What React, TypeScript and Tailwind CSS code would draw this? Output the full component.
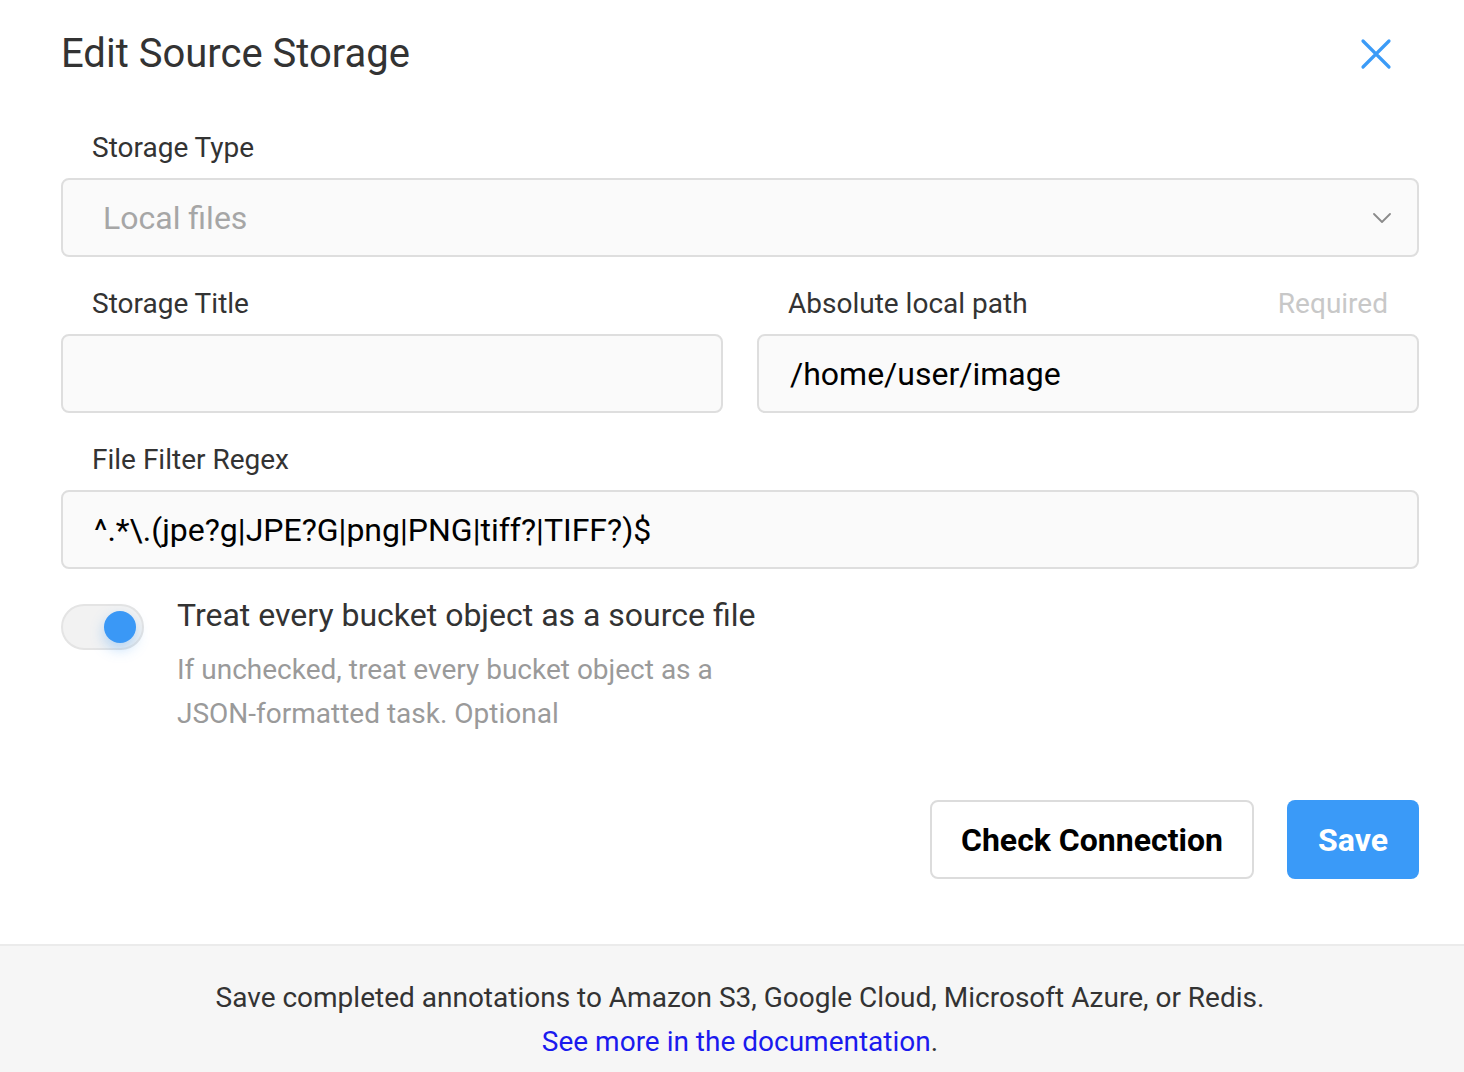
import React from "react";

function Label({ children, hint }: { children: React.ReactNode; hint?: string }) {
  return (
    <div className="flex items-center justify-between px-[31px] pt-[2px] h-[48px] text-[28px] text-[#333]">
      <span>{children}</span>
      {hint && <span className="text-[#c8c8c8]">{hint}</span>}
    </div>
  );
}

function Field({ value }: { value?: string }) {
  return (
    <div className="h-[79px] rounded-[8px] border-2 border-[#dedede] bg-[#fafafa] flex items-center px-[31px] text-[32px] text-black">
      {value}
    </div>
  );
}

export default function App() {
  return (
    <div
      className="w-[1464px] h-[1072px] bg-white flex flex-col overflow-hidden"
      style={{ fontFamily: "Roboto, 'Noto Sans', sans-serif" }}
    >
      {/* Header */}
      <div className="flex items-center justify-between pl-[61px] pr-[72px] h-[108px]">
        <h1 className="text-[40px] text-[#333] leading-none">Edit Source Storage</h1>
        <button type="button" aria-label="Close" className="text-[#3b9bf7]">
          <svg width="32" height="32" viewBox="0 0 32 32" fill="none" stroke="currentColor" strokeWidth="3.2" strokeLinecap="round">
            <path d="M3 3 L29 29 M29 3 L3 29" />
          </svg>
        </button>
      </div>

      <div className="flex-1 pl-[61px] pr-[45px] pt-[15px]">
        <Label>Storage Type</Label>
        <div className="mt-[7px] h-[79px] rounded-[8px] border-2 border-[#dedede] bg-[#fafafa] flex items-center justify-between pl-[40px] pr-[26px] text-[32px] text-[#a6a6a6]">
          <span>Local files</span>
          <svg width="18" height="10" viewBox="0 0 18 10" fill="none" stroke="#8a8a8a" strokeWidth="1.8" strokeLinecap="round" strokeLinejoin="round">
            <path d="M1 1 L9 9 L17 1" />
          </svg>
        </div>

        <div className="grid grid-cols-2 gap-[34px] mt-[22px]">
          <div>
            <Label>Storage Title</Label>
            <div className="mt-[7px]">
              <Field value="" />
            </div>
          </div>
          <div>
            <Label hint="Required">Absolute local path</Label>
            <div className="mt-[7px]">
              <Field value="/home/user/image" />
            </div>
          </div>
        </div>

        <div className="mt-[22px]">
          <Label>File Filter Regex</Label>
          <div className="mt-[7px]">
            <Field value="^.*\.(jpe?g|JPE?G|png|PNG|tiff?|TIFF?)$" />
          </div>
        </div>

        <div className="flex mt-[35px]">
          <div className="w-[83px] h-[46px] rounded-full bg-[#f2f2f2] border-2 border-[#e4e4e4] flex items-center justify-end pr-[6px] shrink-0">
            <div className="w-[32px] h-[32px] rounded-full bg-[#3a98f6] shadow-[0_6px_14px_rgba(58,152,246,0.35)]" />
          </div>
          <div className="ml-[33px] -mt-[11px]">
            <div className="text-[32px] text-[#333] leading-[44px]">Treat every bucket object as a source file</div>
            <div className="text-[28px] text-[#9a9a9a] leading-[44px] mt-[11px] w-[560px]">
              If unchecked, treat every bucket object as a JSON-formatted task. Optional
            </div>
          </div>
        </div>

        <div className="flex justify-end gap-[33px] mt-[64px]">
          <button type="button" className="h-[79px] w-[324px] rounded-[8px] border-2 border-[#dcdcdc] bg-white text-[32px] font-bold text-black">
            Check Connection
          </button>
          <button type="button" className="h-[79px] w-[132px] rounded-[8px] bg-[#3a9af8] text-[32px] font-bold text-white">
            Save
          </button>
        </div>
      </div>

      {/* Footer */}
      <div className="h-[128px] border-t-2 border-[#ebebeb] bg-[#f6f6f6] flex flex-col items-center pt-[30px] pl-[16px] text-[28px] leading-[44px] text-[#333]">
        <div>Save completed annotations to Amazon S3, Google Cloud, Microsoft Azure, or Redis.</div>
        <div>
          <a href="#" className="text-[#1a1aee]">See more in the documentation</a>.
        </div>
      </div>
    </div>
  );
}
